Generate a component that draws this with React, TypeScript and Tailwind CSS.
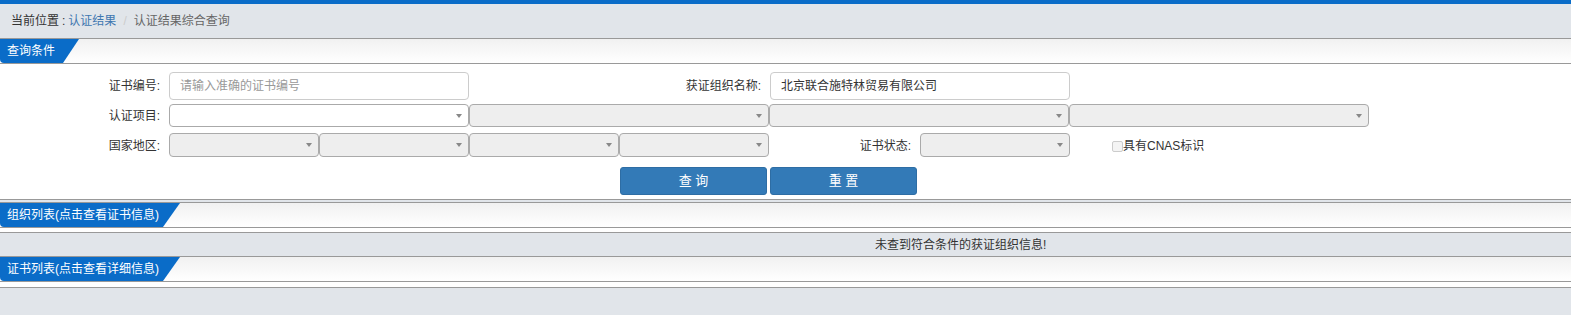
import clsx from "clsx";

function Select({ wide, white }: { wide?: boolean; white?: boolean }) {
  return (
    <div
      className={clsx(
        "flex h-full items-center justify-end rounded-[4px] border border-[#aaa] pr-[6px]",
        wide ? "w-[300px]" : "w-[150px]",
        white ? "bg-white" : "bg-[#eee]"
      )}
    >
      <span className="h-0 w-0 border-x-[3.5px] border-t-[4px] border-x-transparent border-t-[#888]" />
    </div>
  );
}

function SectionHeader({ title, wide }: { title: string; wide?: boolean }) {
  return (
    <div className="flex h-[26px] border-y border-[#999] bg-gradient-to-b from-[#f1f1f1] to-white">
      <div
        className={clsx(
          "flex h-full items-center rounded-bl-[4px] bg-[#0a6cc8] pl-[7px] text-[12px] text-white",
          wide
            ? "w-[180px] [clip-path:polygon(0_0,180px_0,163px_100%,0_100%)]"
            : "w-[79px] [clip-path:polygon(0_0,79px_0,63px_100%,0_100%)]"
        )}
      >
        {title}
      </div>
    </div>
  );
}

export default function App() {
  return (
    <div className="min-h-[315px] bg-[#e1e5ea] font-['Liberation_Sans','Noto_Sans_CJK_SC',sans-serif] text-[12px] text-[#333]">
      <div className="h-[4px] bg-[#0a6cc8]" />

      <div className="flex h-[34px] items-center pl-[11px]">
        <span>当前位置</span>
        <span className="px-[3px]">:</span>
        <span className="text-[#3f77b0]">认证结果</span>
        <span className="px-[7px] text-[#ccc]">/</span>
        <span className="text-[#666]">认证结果综合查询</span>
      </div>

      <SectionHeader title="查询条件" />
      <div className="mb-[2px] border-b border-[#999] bg-white pt-[8px] pb-[4px]">
        <div className="flex h-[28px] items-center">
          <div className="w-[169px] pr-[9px] text-right">证书编号:</div>
          <div className="flex h-full w-[300px] items-center rounded-[4px] border border-[#ccc] pl-[10px] text-[#999]">
            请输入准确的证书编号
          </div>
          <div className="w-[301px] pr-[9px] text-right">获证组织名称:</div>
          <div className="flex h-full w-[300px] items-center rounded-[4px] border border-[#ccc] pl-[10px]">
            北京联合施特林贸易有限公司
          </div>
        </div>

        <div className="mt-[4px] flex h-[23px] items-center">
          <div className="w-[169px] pr-[9px] text-right">认证项目:</div>
          <Select wide white />
          <Select wide />
          <Select wide />
          <Select wide />
        </div>

        <div className="mt-[6px] flex h-[24px] items-center">
          <div className="w-[169px] pr-[9px] pt-[2px] text-right">国家地区:</div>
          <Select />
          <Select />
          <Select />
          <Select />
          <div className="w-[151px] pr-[9px] pt-[2px] text-right">证书状态:</div>
          <Select />
          <div className="ml-[42px] flex items-center pt-[2px]">
            <span className="h-[11px] w-[11px] rounded-[2px] border border-[#ccc] bg-[#f4f4f4]" />
            <span>具有CNAS标识</span>
          </div>
        </div>

        <div className="mt-[10px] flex h-[28px] gap-[3px] pl-[620px]">
          <button className="w-[147px] rounded-[3px] border border-[#2e6da4] bg-[#337ab7] text-[13px] text-white">
            查&nbsp;询
          </button>
          <button className="w-[147px] rounded-[3px] border border-[#2e6da4] bg-[#337ab7] text-[13px] text-white">
            重&nbsp;置
          </button>
        </div>
      </div>

      <div className="bg-white">
        <SectionHeader title="组织列表(点击查看证书信息)" wide />
        <div className="mt-[4px] flex h-[24px] items-center border-t border-[#999] bg-[#e1e5ea] pl-[875px]">
          未查到符合条件的获证组织信息!
        </div>
      </div>

      <div className="bg-white">
        <SectionHeader title="证书列表(点击查看详细信息)" wide />
        <div className="mt-[5px] h-[27px] border-t border-[#999] bg-[#e1e5ea]" />
      </div>
    </div>
  );
}
